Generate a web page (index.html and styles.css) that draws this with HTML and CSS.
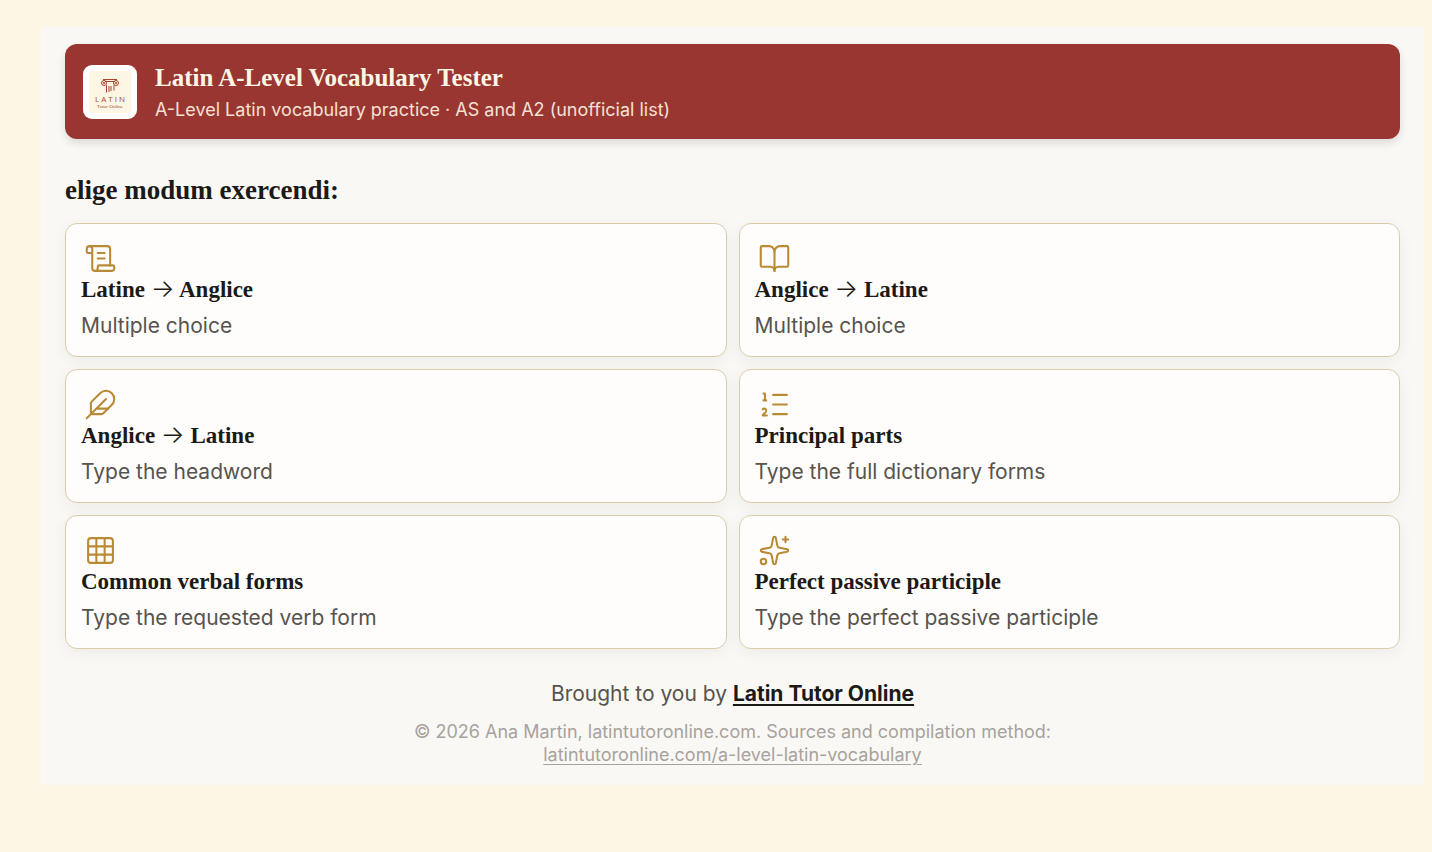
FILE: index.html
```html
<!DOCTYPE html>
<html lang="en">
<head>
    <meta charset="UTF-8">
    <meta name="viewport" content="width=device-width, initial-scale=1">
    <title>Latin A-Level Vocabulary Tester</title>
    <link rel="stylesheet" href="styles.css">
</head>
<body>
    <div class="app">
        <header class="banner">
            <div class="logo">
                <svg viewBox="0 0 42 42" aria-hidden="true">
                    <rect width="42" height="42" rx="3" fill="#fef6e4"/>
                    <g fill="none" stroke="#a4492f" stroke-width="1">
                        <path d="M14 8.500H28M16 10.500H26"/>
                        <circle cx="15" cy="12" r="2.500"/>
                        <circle cx="27" cy="12" r="2.500"/>
                        <circle cx="15" cy="12" r="0.800"/>
                        <circle cx="27" cy="12" r="0.800"/>
                        <path d="M17.500 14V21.500M20 15V21M22 15V20M25 14V19.500"/>
                    </g>
                    <text class="logo-name" x="21" y="31" text-anchor="middle">L A T I N</text>
                    <text class="logo-tag" x="21" y="37" text-anchor="middle">Tutor Online</text>
                </svg>
            </div>
            <div>
                <h1>Latin A-Level Vocabulary Tester</h1>
                <p class="tagline">A-Level Latin vocabulary practice · AS and A2 (unofficial list)</p>
            </div>
        </header>

        <main>
            <h2>elige modum exercendi:</h2>
            <div class="modes">
                <button class="mode" type="button">
                    <span class="mode-icon">
                        <svg viewBox="0 0 24 24"><path d="M15 12h-5M15 8h-5M19 17V5a2 2 0 0 0-2-2H4"/><path d="M8 21h12a2 2 0 0 0 2-2v-1a1 1 0 0 0-1-1H11a1 1 0 0 0-1 1v1a2 2 0 1 1-4 0V5a2 2 0 1 0-4 0v2a1 1 0 0 0 1 1h3"/></svg>
                    </span>
                    <span class="mode-title">Latine <span class="arrow">→</span> Anglice</span>
                    <span class="mode-desc">Multiple choice</span>
                </button>
                <button class="mode" type="button">
                    <span class="mode-icon">
                        <svg viewBox="0 0 24 24"><path d="M12 7v14"/><path d="M3 18a1 1 0 0 1-1-1V4a1 1 0 0 1 1-1h5a4 4 0 0 1 4 4 4 4 0 0 1 4-4h5a1 1 0 0 1 1 1v13a1 1 0 0 1-1 1h-6a3 3 0 0 0-3 3 3 3 0 0 0-3-3z"/></svg>
                    </span>
                    <span class="mode-title">Anglice <span class="arrow">→</span> Latine</span>
                    <span class="mode-desc">Multiple choice</span>
                </button>
                <button class="mode" type="button">
                    <span class="mode-icon">
                        <svg viewBox="0 0 24 24"><path d="M12.670 19a2 2 0 0 0 1.416-.588l6.154-6.172a6 6 0 0 0-8.490-8.490L5.586 9.914A2 2 0 0 0 5 11.328V18a1 1 0 0 0 1 1z"/><path d="M16 8 2 22M17.500 15H9"/></svg>
                    </span>
                    <span class="mode-title">Anglice <span class="arrow">→</span> Latine</span>
                    <span class="mode-desc">Type the headword</span>
                </button>
                <button class="mode" type="button">
                    <span class="mode-icon">
                        <svg viewBox="0 0 24 24"><path d="M11 5h10M11 12h10M11 19h10M4 4h1v5M4 9h2"/><path d="M6.500 20H3.400c0-1 2.600-1.925 2.600-3.500a1.500 1.500 0 0 0-2.600-1.020"/></svg>
                    </span>
                    <span class="mode-title">Principal parts</span>
                    <span class="mode-desc">Type the full dictionary forms</span>
                </button>
                <button class="mode" type="button">
                    <span class="mode-icon">
                        <svg viewBox="0 0 24 24"><rect x="3" y="3" width="18" height="18" rx="2"/><path d="M3 9h18M3 15h18M9 3v18M15 3v18"/></svg>
                    </span>
                    <span class="mode-title">Common verbal forms</span>
                    <span class="mode-desc">Type the requested verb form</span>
                </button>
                <button class="mode" type="button">
                    <span class="mode-icon">
                        <svg viewBox="0 0 24 24"><path d="M11.017 2.814a1 1 0 0 1 1.966 0l1.051 5.558a2 2 0 0 0 1.594 1.594l5.558 1.051a1 1 0 0 1 0 1.966l-5.558 1.051a2 2 0 0 0-1.594 1.594l-1.051 5.558a1 1 0 0 1-1.966 0l-1.051-5.558a2 2 0 0 0-1.594-1.594l-5.558-1.051a1 1 0 0 1 0-1.966l5.558-1.051a2 2 0 0 0 1.594-1.594z"/><path d="M20 2v4M22 4h-4"/><circle cx="4" cy="20" r="2"/></svg>
                    </span>
                    <span class="mode-title">Perfect passive participle</span>
                    <span class="mode-desc">Type the perfect passive participle</span>
                </button>
            </div>
        </main>

        <footer>
            <p class="credit">Brought to you by <a href="#">Latin Tutor Online</a></p>
            <p class="copyright">© 2026 Ana Martin, latintutoronline.com. Sources and compilation method: <a href="#">latintutoronline.com/a-level-latin-vocabulary</a></p>
        </footer>
    </div>
</body>
</html>
```
FILE: styles.css
```css
* {
    box-sizing: border-box;
}
body {
    margin: 0;
    padding: 27px 8px 67px 41px;
    background-color: #fef6e4;
    color: #1c1917;
    font-family: Inter, sans-serif;
}
h1, h2, p {
    margin: 0;
}
.app {
    padding: 17px 24px 19px;
    background-color: #f9f8f4;
}

/* header */
.banner {
    display: flex;
    align-items: center;
    gap: 18px;
    padding: 18px;
    border-radius: 12px;
    background-color: #993632;
    box-shadow: 0 4px 8px rgba(0,0,0,0.12);
    color: #fef6e4;
}
.logo {
    width: 54px;
    height: 54px;
    padding: 6px;
    border-radius: 9px;
    background-color: white;
}
.logo svg {
    display: block;
}
.logo-name {
    font: 8px "Open Sans", sans-serif;
    fill: #a4492f;
}
.logo-tag {
    font: 5px "Liberation Serif", serif;
    fill: #a4492f;
}
h1, h2, .mode-title {
    font-family: "Liberation Serif", serif;
    font-weight: bold;
}
h1 {
    margin-bottom: 4px;
    font-size: 25px;
    line-height: 32px;
}
.tagline {
    font-size: 18px;
    line-height: 23px;
    color: #f4e1d3;
}

/* mode picker */
h2 {
    margin: 35px 0 17px;
    font-size: 27px;
    line-height: 32px;
}
.modes {
    display: grid;
    grid-template-columns: 1fr 1fr;
    gap: 12px;
}
.mode {
    display: flex;
    flex-direction: column;
    align-items: flex-start;
    padding: 15px;
    border: 1px solid #dccbaa;
    border-radius: 12px;
    background-color: #fffdfc;
    box-shadow: 0 4px 16px rgba(0,0,0,0.05);
    color: #1c1917;
    font-family: inherit;
    text-align: left;
    cursor: pointer;
}
.mode-icon {
    display: flex;
    align-items: center;
    justify-content: center;
    width: 39px;
    height: 39px;
}
.mode-icon svg {
    width: 33px;
    height: 33px;
    fill: none;
    stroke: #b98a35;
    stroke-width: 1.5;
    stroke-linecap: round;
    stroke-linejoin: round;
}
.mode-title {
    margin-bottom: 9px;
    font-size: 23px;
    line-height: 24px;
}
.arrow {
    font-family: Inter, sans-serif;
    font-size: 25px;
    font-weight: 300;
    line-height: 1px;
}
.mode-desc {
    font-size: 21px;
    line-height: 30px;
    color: #57534e;
}

footer {
    margin-top: 30px;
    text-align: center;
}
.credit {
    margin-bottom: 11px;
    font-size: 21px;
    line-height: 30px;
    color: #57534e;
}
.credit a {
    color: #1c1917;
    font-weight: bold;
    text-underline-offset: 3px;
}
.copyright {
    max-width: 680px;
    margin: 0 auto;
    font-size: 18px;
    line-height: 23px;
    color: #a8a29e;
}
.copyright a {
    color: inherit;
    text-underline-offset: 3px;
}
```
